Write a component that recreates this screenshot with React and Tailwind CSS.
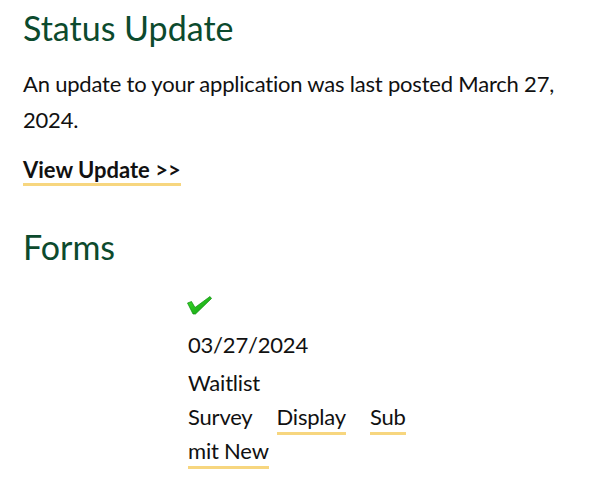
export default function App() {
  const font = { fontFamily: 'Lato, "Noto Sans", sans-serif' };
  return (
    <div className="w-[610px] h-[500px] bg-white px-[23px] pt-[6px] text-[#111]" style={font}>
      <h2 className="text-[34px] leading-[44px] text-[#0c4a2d] font-normal">Status Update</h2>
      <p className="mt-[16px] text-[22px] leading-[36px] tracking-[-0.2px]">
        An update to your application was last posted March 27, 2024.
      </p>
      <div className="mt-[19px]">
        <a className="inline-block text-[22px] leading-[26px] font-bold border-b-[3px] border-[#f7d67f]">
          View Update &gt;&gt;
        </a>
      </div>
      <h2 className="mt-[39px] text-[34px] leading-[44px] text-[#0c4a2d] font-normal">Forms</h2>
      <div className="ml-[165px] mt-[27px] text-[22px] tracking-[-0.2px]">
        <svg className="block -ml-[1px]" width="25" height="19" viewBox="0 0 25 19">
          <defs>
            <linearGradient id="ck" x1="0" y1="0" x2="1" y2="1">
              <stop offset="0" stopColor="#3ee02a" />
              <stop offset="1" stopColor="#0d9a10" />
            </linearGradient>
          </defs>
          <path d="M0.5 7 L4.5 5.5 L8 11.5 L23 0.5 L24.5 2.5 L8.5 18 L6 18 Z" fill="url(#ck)" stroke="#0a8a0c" strokeWidth="0.7" strokeLinejoin="round" />
        </svg>
        <div className="mt-[11px] leading-[38px]">03/27/2024</div>
        <div className="leading-[38px]">Waitlist</div>
        <div className="flex gap-[24px] leading-[30px]">
          <span>Survey</span>
          <a className="border-b-[3px] border-[#f7d67f]">Display</a>
          <a className="border-b-[3px] border-[#f7d67f]">Sub</a>
        </div>
        <div className="mt-[1px] flex leading-[30px]">
          <a className="border-b-[3px] border-[#f7d67f]">mit New</a>
        </div>
      </div>
    </div>
  );
}
